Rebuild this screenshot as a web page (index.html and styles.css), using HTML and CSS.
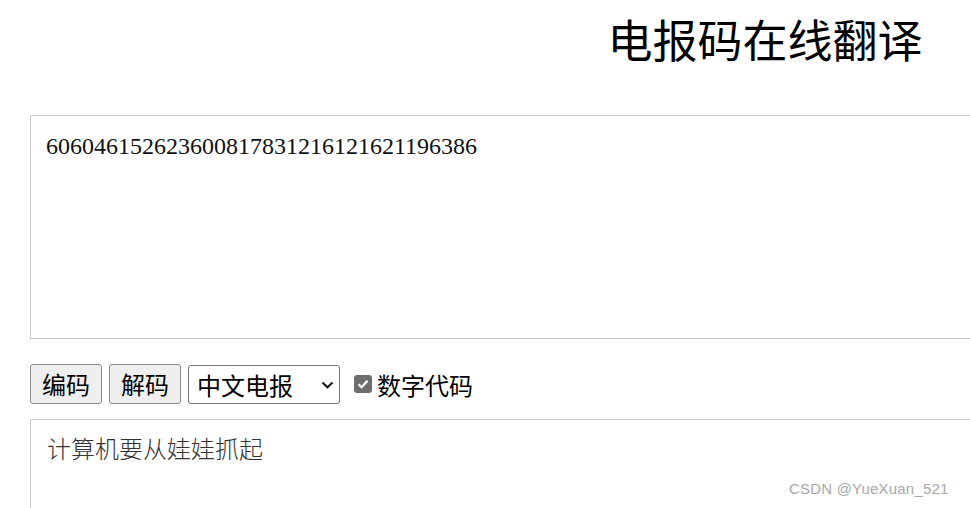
FILE: index.html
```html
<!DOCTYPE html>
<html lang="zh">
<head>
<meta charset="utf-8">
<title>电报码在线翻译</title>
<link rel="stylesheet" href="styles.css">
</head>
<body>
<div class="page">
  <h1 class="title">电报码在线翻译</h1>
  <textarea class="box box-code">606046152623600817831216121621196386</textarea>
  <div class="controls">
    <button class="btn">编码</button>
    <button class="btn">解码</button>
    <div class="select">
      <span>中文电报</span>
      <svg class="chev" width="13" height="8" viewBox="0 0 13 8"><path d="M1.5 1.5 L6.5 6.3 L11.5 1.5" fill="none" stroke="#111" stroke-width="2"/></svg>
    </div>
    <label class="check">
      <span class="cbox"><svg width="18" height="18" viewBox="0 0 18 18"><path d="M4.5 9.2 L7.6 12.2 L13.5 5.8" fill="none" stroke="#fff" stroke-width="2.2"/></svg></span>
      <span>数字代码</span>
    </label>
  </div>
  <textarea class="box box-text">计算机要从娃娃抓起</textarea>
</div>
<div class="watermark">CSDN @YueXuan_521</div>
</body>
</html>
```
FILE: styles.css
```css
html, body {
  margin: 0;
  padding: 0;
  overflow: hidden;
  background: #fff;
}
body {
  width: 970px;
  height: 508px;
  position: relative;
}
.page {
  width: 1470px;
  margin-left: 30px;
  font-family: "Noto Sans CJK SC", sans-serif;
}
.title {
  margin: 0;
  padding-top: 6px;
  height: 115px;
  box-sizing: border-box;
  text-align: center;
  font-weight: normal;
  font-size: 45px;
  line-height: 65px;
  color: #000;
}
.box {
  display: block;
  width: 1470px;
  box-sizing: border-box;
  border: 1px solid #cccccc;
  margin: 0;
  resize: none;
  outline: none;
  background: #fff;
  color: #222;
  padding: 16px 15px;
}
.box-code {
  height: 224px;
  padding-top: 14px;
  font-family: "Liberation Serif", serif;
  font-size: 24px;
  line-height: 32px;
  color: #111;
}
.box-text {
  height: 100px;
  padding-top: 10px;
  padding-left: 16px;
  font-family: "Noto Sans CJK SC", sans-serif;
  font-weight: 300;
  font-size: 24px;
  line-height: 36px;
  color: #333;
}
.controls {
  display: flex;
  align-items: flex-start;
  gap: 7px;
  height: 80px;
  box-sizing: border-box;
  padding-top: 25px;
}
.btn {
  width: 72px;
  height: 40px;
  box-sizing: border-box;
  border: 1px solid #8a8a8a;
  border-radius: 3px;
  background: #efefef;
  font-family: "Noto Sans CJK SC", sans-serif;
  font-size: 24px;
  line-height: 1;
  padding: 0;
  color: #000;
}
.select {
  width: 152px;
  height: 39px;
  margin-top: 1px;
  box-sizing: border-box;
  border: 1px solid #767676;
  border-radius: 3px;
  display: flex;
  align-items: center;
  justify-content: space-between;
  padding: 0 5px 0 8px;
  font-size: 24px;
  color: #000;
}
.chev { display: block; }
.check {
  display: flex;
  align-items: center;
  gap: 5px;
  margin-left: 7px;
  height: 40px;
  font-size: 24px;
  color: #000;
}
.cbox {
  width: 18px;
  height: 18px;
  border-radius: 3px;
  background: #6e6e6e;
  display: block;
}
.cbox svg { display: block; }
.watermark {
  position: absolute;
  left: 789px;
  top: 480px;
  font-family: "Liberation Sans", sans-serif;
  font-size: 15px;
  color: #a8a8a8;
  letter-spacing: 0.2px;
}
```
